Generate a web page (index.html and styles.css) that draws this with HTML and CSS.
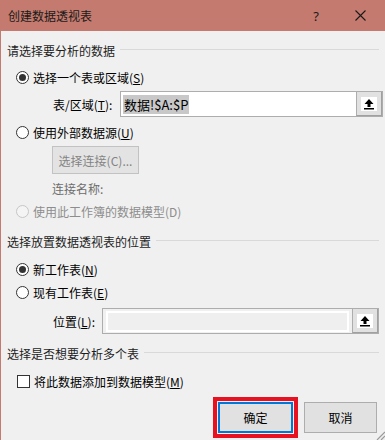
FILE: index.html
```html
<!DOCTYPE html>
<html lang="zh-CN">
<head>
  <meta charset="UTF-8" />
  <title>创建数据透视表</title>
  <link rel="stylesheet" href="styles.css">
</head>
<body>
  <div class="window">
    <div class="titlebar">
      <span class="title">创建数据透视表</span>
      <span class="help">?</span>
      <svg class="close" width="11" height="11" viewBox="0 0 11 11">
        <path d="M0.5 0.5 L10.5 10.5 M10.5 0.5 L0.5 10.5" stroke="#1a1a1a" stroke-width="1.1" fill="none"/>
      </svg>
    </div>

    <div class="content">
      <!-- source -->
      <div class="group-head h1"><span>请选择要分析的数据</span><i></i></div>

      <label class="option r1"><span class="radio checked"></span><span>选择一个表或区域(<u>S</u>)</span></label>

      <div class="field-row range-row">
        <span class="field-label">表/区域(<u>T</u>):</span>
        <div class="field">
          <div class="field-input"><span class="sel">数据!$A:$P</span></div>
          <div class="field-btn">
            <svg width="16" height="14" viewBox="0 0 16 14">
              <rect width="16" height="14" fill="#fff"/>
              <path d="M8 2 L12.5 7 L9.5 7 L9.5 10 L6.5 10 L6.5 7 L3.5 7 Z" fill="#000"/>
              <rect x="3" y="11" width="10" height="1.5" fill="#000"/>
            </svg>
          </div>
        </div>
      </div>

      <label class="option r2"><span class="radio"></span><span>使用外部数据源(<u>U</u>)</span></label>

      <div class="conn-row"><span class="btn-disabled">选择连接(C)...</span></div>
      <div class="conn-name">连接名称:</div>

      <label class="option r3 disabled"><span class="radio"></span><span>使用此工作簿的数据模型(D)</span></label>

      <!-- destination -->
      <div class="group-head h2"><span>选择放置数据透视表的位置</span><i></i></div>

      <label class="option r4"><span class="radio checked"></span><span>新工作表(<u>N</u>)</span></label>
      <label class="option r5"><span class="radio"></span><span>现有工作表(<u>E</u>)</span></label>

      <div class="field-row loc-row">
        <span class="field-label">位置(<u>L</u>):</span>
        <div class="field off">
          <div class="field-input"><div class="field-inner"></div></div>
          <div class="field-btn">
            <svg width="16" height="14" viewBox="0 0 16 14">
              <rect width="16" height="14" fill="#fff"/>
              <path d="M8 2 L12.5 7 L9.5 7 L9.5 10 L6.5 10 L6.5 7 L3.5 7 Z" fill="#000"/>
              <rect x="3" y="11" width="10" height="1.5" fill="#000"/>
            </svg>
          </div>
        </div>
      </div>

      <!-- multiple tables -->
      <div class="group-head h3"><span>选择是否想要分析多个表</span><i></i></div>

      <label class="option r6"><span class="check"></span><span>将此数据添加到数据模型(<u>M</u>)</span></label>

      <div class="actions">
        <div class="ok-mark"><span class="btn ok">确定</span></div>
        <span class="btn cancel">取消</span>
      </div>
    </div>

    <svg class="grip" width="10" height="10" viewBox="0 0 10 10">
      <path d="M10 2 L2 10 M10 6 L6 10" stroke="#9a9a9a" stroke-width="1.2"/>
    </svg>
  </div>
</body>
</html>
```

FILE: styles.css
```css
* { margin: 0; padding: 0; box-sizing: border-box; }

body {
  width: 385px;
  height: 440px;
  overflow: hidden;
  font-family: "Noto Sans CJK SC", "Noto Sans", sans-serif;
  font-size: 12px;
  color: #000;
  background: #f0f0f0;
}

.window {
  position: relative;
  height: 440px;
  border-left: 1px solid #c47a6e;
  background: #f0f0f0;
}

.titlebar {
  height: 31px;
  display: flex;
  align-items: center;
  background: #c47a6e;
  padding-left: 7px;
  color: #1a1a1a;
}

.title {
  flex: 1;
  font-size: 12px;
}

.help {
  font-family: "Noto Sans", sans-serif;
  font-size: 13px;
  margin-right: 36px;
}

.close {
  margin-right: 19px;
}

.content {
  display: flex;
  flex-direction: column;
  padding: 0 2px 0 6px;
}

u { text-decoration: underline; text-underline-offset: 1px; }

.group-head {
  height: 18px;
  display: flex;
  align-items: center;
  color: #1e1e1e;
  padding-right: 4px;
}

.group-head i {
  flex: 1;
  height: 1px;
  background: #d9d9d9;
  margin: -2px 0 0 5px;
}

.h1 { margin-top: 10px; }
.h2 { margin-top: 12px; }
.h3 { margin-top: 10px; }

.option {
  height: 18px;
  display: flex;
  align-items: center;
  padding-left: 9px;
  gap: 4px;
}

.r1 { margin-top: 9px; }
.r2 { margin-top: 6px; }
.r3 { margin-top: 4px; }
.r4 { margin-top: 10px; }
.r5 { margin-top: 5px; }
.r6 { margin-top: 10px; }

.radio {
  width: 13px;
  height: 13px;
  border: 1px solid #333;
  border-radius: 50%;
  background: #fff;
  display: flex;
  align-items: center;
  justify-content: center;
}

.radio.checked::after {
  content: '';
  width: 7px;
  height: 7px;
  border-radius: 50%;
  background: #333;
}

.option.disabled { color: #8d8d8d; }
.option.disabled .radio { border-color: #c6c6c6; background: #f4f4f4; }

.check {
  width: 13px;
  height: 13px;
  border: 1px solid #333;
  background: #fff;
}

.r6 { padding-left: 10px; }

.field-row {
  height: 26px;
  display: flex;
  align-items: center;
  padding-left: 46px;
}

.range-row { margin-top: 5px; }
.loc-row { margin-top: 7px; }

.field-label {
  width: 67px;
}

.loc-row .field-label { width: 49px; }
.loc-row .field { margin-right: 4px; }

.field {
  flex: 1;
  height: 26px;
  display: flex;
  border: 1px solid #adadad;
  background: #fff;
}

.field-input {
  flex: 1;
  display: flex;
  align-items: center;
  padding-left: 2px;
}

.sel {
  background: #c8c8c8;
  line-height: 19px;
  padding: 0 1px;
  font-size: 13px;
}

.field-btn {
  width: 26px;
  display: flex;
  align-items: center;
  justify-content: center;
  background: #e1e1e1;
  border-left: 1px solid #adadad;
  border-right: 1px solid #a0a0a0;
  border-bottom: 1px solid #a0a0a0;
}

.field.off { background: #f0f0f0; }
.field.off .field-input { padding: 2px 3px 1px 3px; }

.field-inner {
  width: 100%;
  height: 100%;
  border: 2px solid #fff;
  background: #efefef;
}

.conn-row {
  margin-top: 5px;
  padding-left: 45px;
  display: flex;
}

.btn-disabled {
  width: 87px;
  height: 28px;
  display: flex;
  align-items: center;
  justify-content: center;
  background: #e3e3e3;
  border: 1px solid #c2c2c2;
  color: #838383;
}

.conn-name {
  margin-top: 6px;
  height: 18px;
  line-height: 18px;
  padding-left: 45px;
  color: #6d6d6d;
}

.actions {
  margin-top: 7px;
  display: flex;
  align-items: center;
  padding-left: 206px;
  gap: 6px;
}

.ok-mark {
  border: 4px solid #e8111f;
  padding: 1px;
}

.btn {
  height: 31px;
  display: flex;
  align-items: center;
  justify-content: center;
  background: #e1e1e1;
  border: 1px solid #adadad;
}

.ok {
  width: 75px;
  border: 2px solid #0078d7;
}

.cancel {
  width: 73px;
}

.grip {
  position: absolute;
  right: 0;
  bottom: 0;
}
```
